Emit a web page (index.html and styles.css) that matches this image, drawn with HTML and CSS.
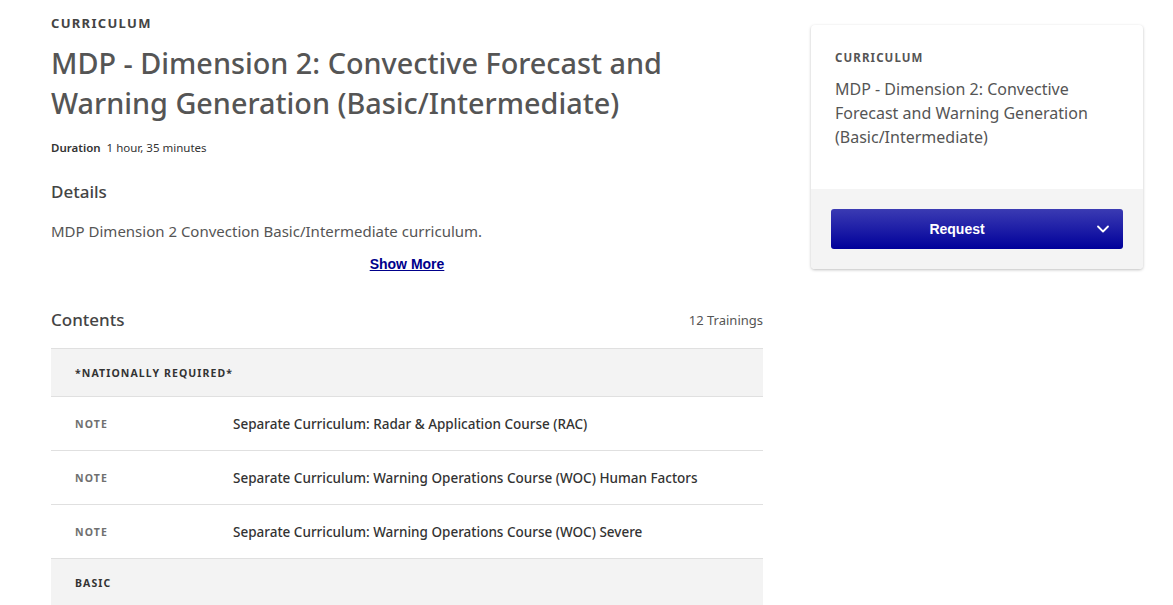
FILE: index.html
```html
<!DOCTYPE html>
<html lang="en">
<head>
<meta charset="utf-8">
<title>MDP - Dimension 2</title>
<link rel="stylesheet" href="styles.css">
</head>
<body>
<div class="page">
  <main class="main">
    <div class="eyebrow">CURRICULUM</div>
    <h1 class="title">MDP - Dimension 2: Convective Forecast and Warning Generation (Basic/Intermediate)</h1>
    <div class="duration"><span class="dur-label">Duration</span><span class="dur-value">1 hour, 35 minutes</span></div>
    <h2 class="section-h">Details</h2>
    <p class="desc">MDP Dimension 2 Convection Basic/Intermediate curriculum.</p>
    <div class="more-wrap"><a class="more" href="#">Show More</a></div>
    <div class="contents-head">
      <h2 class="section-h contents-h">Contents</h2>
      <span class="count">12 Trainings</span>
    </div>
    <div class="table">
      <div class="group">*NATIONALLY REQUIRED*</div>
      <div class="row"><span class="type">NOTE</span><span class="name">Separate Curriculum: Radar &amp; Application Course (RAC)</span></div>
      <div class="row"><span class="type">NOTE</span><span class="name">Separate Curriculum: Warning Operations Course (WOC) Human Factors</span></div>
      <div class="row"><span class="type">NOTE</span><span class="name">Separate Curriculum: Warning Operations Course (WOC) Severe</span></div>
      <div class="group group-last">BASIC</div>
    </div>
  </main>
  <aside class="side">
    <div class="card">
      <div class="card-body">
        <div class="card-eyebrow">CURRICULUM</div>
        <div class="card-title">MDP - Dimension 2: Convective Forecast and Warning Generation (Basic/Intermediate)</div>
      </div>
      <div class="card-foot">
        <button class="btn" type="button">
          <span class="btn-label">Request</span>
          <svg class="chev" width="14" height="14" viewBox="0 0 14 14" aria-hidden="true"><path d="M2 4.5 L7 9.5 L12 4.5" fill="none" stroke="#fff" stroke-width="1.8" stroke-linecap="round" stroke-linejoin="round"/></svg>
        </button>
      </div>
    </div>
  </aside>
</div>
</body>
</html>
```

FILE: styles.css
```css
* { box-sizing: border-box; }
html, body { margin: 0; padding: 0; background: #fff; }
body {
  font-family: "Noto Sans", "Open Sans", "Liberation Sans", sans-serif;
  color: #333;
  overflow: hidden;
  height: 605px;
}
.page {
  display: grid;
  grid-template-columns: 712px 332px;
  column-gap: 48px;
  padding: 0 0 0 51px;
}
.main { padding-top: 14px; }
.eyebrow {
  font-size: 13px;
  font-weight: 700;
  letter-spacing: 1.3px;
  color: #444;
  line-height: 18px;
}
.title {
  margin: 11px 0 0 0;
  font-size: 28.8px;
  font-weight: 500;
  line-height: 40px;
  color: #555;
}
.duration {
  margin-top: 17px;
  font-size: 11.5px;
  line-height: 16px;
  color: #333;
}
.dur-label { font-weight: 600; margin-right: 6px; }
.section-h {
  margin: 0;
  font-size: 17px;
  font-weight: 500;
  color: #444;
  line-height: 24px;
}
.duration + .section-h { margin-top: 24px; }
.desc {
  margin: 17px 0 0 0;
  font-size: 15px;
  line-height: 20px;
  color: #555;
}
.more-wrap { text-align: center; margin-top: 14px; line-height: 16px; }
.more {
  font-family: "Liberation Sans", Arial, sans-serif;
  font-weight: 700;
  font-size: 14px;
  color: #00008b;
  text-decoration: underline;
}
.contents-head {
  display: flex;
  justify-content: space-between;
  align-items: baseline;
  margin-top: 36px;
}
.count { font-size: 13px; color: #555; position: relative; top: -1px; }
.table { margin-top: 16px; }
.group {
  background: #f3f3f3;
  border-top: 1px solid #e0e0e0;
  height: 48px;
  padding: 0 24px;
  display: flex;
  align-items: center;
  font-size: 10.5px;
  font-weight: 700;
  letter-spacing: 1.1px;
  color: #333;
}
.group-last { height: 60px; padding-bottom: 12px; }
.row {
  display: flex;
  align-items: center;
  height: 54px;
  border-top: 1px solid #e0e0e0;
  padding: 0 24px;
}
.type {
  width: 158px;
  flex: none;
  font-size: 10.5px;
  font-weight: 700;
  letter-spacing: 1.1px;
  color: #707070;
}
.name {
  font-size: 13.5px;
  font-weight: 500;
  color: #333;
}
.side { padding-top: 25px; }
.card {
  border-radius: 4px;
  box-shadow: 0 1px 3px rgba(0,0,0,0.25);
  overflow: hidden;
  background: #fff;
}
.card-body {
  padding: 25px 24px 40px 24px;
  height: 164px;
}
.card-eyebrow {
  font-size: 11.5px;
  font-weight: 700;
  letter-spacing: 1.1px;
  color: #555;
  line-height: 16px;
}
.card-title {
  margin-top: 11px;
  font-size: 16px;
  line-height: 24px;
  color: #555;
}
.card-foot {
  background: #f4f4f4;
  padding: 20px 20px;
}
.btn {
  position: relative;
  display: flex;
  align-items: center;
  justify-content: center;
  width: 100%;
  height: 40px;
  border: 0;
  border-radius: 3px;
  padding: 0 40px 0 0;
  background: linear-gradient(#3b3bb3, #00009a);
  color: #fff;
  font-family: "Liberation Sans", Arial, sans-serif;
  font-weight: 700;
  font-size: 14px;
  cursor: pointer;
}
.chev { position: absolute; right: 13px; top: 13px; }
```
